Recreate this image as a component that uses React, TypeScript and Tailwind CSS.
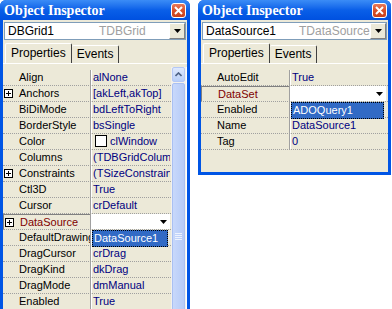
import React from 'react';

const font = { fontFamily: '"Liberation Sans", Arial, sans-serif' };

type Row = { name: string; value?: string; plus?: boolean; swatch?: boolean; selected?: boolean; dropdown?: string };

function CloseBtn() {
  return (
    <div className="w-[15px] h-[15px] rounded-[3px] border border-white bg-gradient-to-b from-[#e8795a] via-[#d8502a] to-[#c8401c] flex items-center justify-center">
      <svg width="9" height="9" viewBox="0 0 9 9">
        <path d="M1 1 L8 8 M8 1 L1 8" stroke="white" strokeWidth="2" />
      </svg>
    </div>
  );
}

function DropArrow() {
  return (
    <svg width="7" height="4" viewBox="0 0 7 4">
      <path d="M0 0 H7 L3.5 4 Z" fill="black" />
    </svg>
  );
}

function PlusBox() {
  return (
    <div className="absolute left-[1px] top-[3px] w-[9px] h-[9px] border border-black bg-white flex items-center justify-center">
      <svg width="7" height="7" viewBox="0 0 7 7">
        <path d="M1 3.5 H6 M3.5 1 V6" stroke="black" strokeWidth="1" />
      </svg>
    </div>
  );
}

function Grid({ rows, nameW, valueW }: { rows: Row[]; nameW: number; valueW: number }) {
  return (
    <div className="flex flex-col">
      {rows.map((r) => (
        <div key={r.name} className="relative flex h-[16px] border-b border-dotted border-[#a0a0a0]">
          <div
            style={{ width: nameW }}
            className={
              'relative h-full pl-[16px] leading-[15px] whitespace-nowrap overflow-hidden ' +
              (r.selected ? 'border-t border-l border-[#808080] text-[#800000]' : 'text-black')
            }
          >
            {r.plus && <PlusBox />}
            {r.name}
          </div>
          <div className="w-[1px] h-full bg-[#a0a0a0]" />
          <div className="w-[1px] h-full bg-white" />
          <div
            style={{ width: valueW }}
            className={
              'relative h-full pl-[1px] leading-[15px] whitespace-nowrap overflow-hidden text-[#000080] ' +
              (r.selected ? 'bg-white' : '')
            }
          >
            {r.swatch && <span className="inline-block align-[-2px] w-[12px] h-[12px] border border-black bg-white mr-[3px] ml-[2px]" />}
            {r.value}
            {r.selected && (
              <div className="absolute right-[3px] top-[6px]">
                <DropArrow />
              </div>
            )}
          </div>
          {r.dropdown && (
            <div
              style={{ left: nameW + 2, width: valueW - 2 }}
              className="absolute top-[16px] h-[17px] z-10 bg-[#316ac5] border border-dotted border-black text-white leading-[15px] pl-[1px]"
            >
              {r.dropdown}
            </div>
          )}
        </div>
      ))}
    </div>
  );
}

function Window({
  width,
  height,
  objName,
  objClass,
  classLeft,
  rows,
  nameW,
  valueW,
  scroll,
}: {
  width: number;
  height: number;
  objName: string;
  objClass: string;
  classLeft: number;
  rows: Row[];
  nameW: number;
  valueW: number;
  scroll?: boolean;
}) {
  return (
    <div
      style={{ width, height }}
      className="flex flex-col rounded-t-[6px] bg-[#0055e5] px-[3px] pb-[3px] overflow-hidden shrink-0"
    >
      <div className="h-[20px] flex items-center justify-between -mx-[3px] px-[4px] bg-gradient-to-b from-[#3b8cf6] via-[#0a5fe8] to-[#0050e0] shrink-0">
        <span className="text-white font-bold text-[14px]" style={{ fontFamily: '"Liberation Serif", "Times New Roman", serif' }}>
          Object Inspector
        </span>
        <CloseBtn />
      </div>
      <div className="flex-1 bg-[#ece9d8] flex flex-col min-h-0 text-[11px]" style={font}>
        <div className="mx-[1px] mt-[2px] h-[18px] border border-[#7f9db9] bg-white flex items-center relative">
          <span className="pl-[3px] text-black text-[12px]">{objName}</span>
          <span style={{ left: classLeft }} className="absolute text-[#a0a0a0] text-[12px]">
            {objClass}
          </span>
          <div className="absolute right-0 top-0 w-[16px] h-[16px] bg-[#ece9d8] border-t border-l border-white border-r border-b border-r-[#808080] border-b-[#808080] flex items-center justify-center">
            <DropArrow />
          </div>
        </div>
        <div className="flex items-end mt-[3px] ml-[2px] h-[20px] shrink-0">
          <div className="h-[20px] px-[5px] border-t border-l border-white border-r border-r-[#404040] rounded-t-[2px] leading-[18px] text-[12px] text-black bg-[#ece9d8]">
            Properties
          </div>
          <div className="h-[18px] px-[5px] border-t border-white border-r border-r-[#404040] rounded-t-[2px] leading-[17px] text-[12px] text-black">
            Events
          </div>
        </div>
        <div className="flex-1 min-h-0 border-t border-white pt-[6px] flex">
          <div className="flex-1 min-h-0 overflow-hidden">
            <Grid rows={rows} nameW={nameW} valueW={valueW} />
          </div>
          {scroll && (
            <div className="w-[16px] -mt-[3px] flex flex-col bg-[#f3f1ec] border-r border-white">
              <div className="h-[15px] mx-[1px] rounded-[2px] bg-gradient-to-b from-[#dfe9fd] to-[#b9cff8] border border-[#b4c8f6] flex items-center justify-center">
                <svg width="7" height="5" viewBox="0 0 7 5">
                  <path d="M0.5 4 L3.5 1 L6.5 4" stroke="#4d6185" strokeWidth="1.6" fill="none" />
                </svg>
              </div>
              <div className="flex-1 mx-[1px] mt-[1px] rounded-[2px] bg-gradient-to-r from-[#c8d8fb] to-[#b6cbf7] border border-[#a9c0f3] flex flex-col items-center pt-[149px]">
                <div className="w-[7px] h-[1px] bg-[#eef3fe] mb-[1px]" />
                <div className="w-[7px] h-[1px] bg-[#eef3fe] mb-[1px]" />
                <div className="w-[7px] h-[1px] bg-[#eef3fe] mb-[1px]" />
                <div className="w-[7px] h-[1px] bg-[#eef3fe]" />
              </div>
            </div>
          )}
        </div>
      </div>
    </div>
  );
}

const leftRows: Row[] = [
  { name: 'Align', value: 'alNone' },
  { name: 'Anchors', value: '[akLeft,akTop]', plus: true },
  { name: 'BiDiMode', value: 'bdLeftToRight' },
  { name: 'BorderStyle', value: 'bsSingle' },
  { name: 'Color', value: 'clWindow', swatch: true },
  { name: 'Columns', value: '(TDBGridColumns)' },
  { name: 'Constraints', value: '(TSizeConstraints)', plus: true },
  { name: 'Ctl3D', value: 'True' },
  { name: 'Cursor', value: 'crDefault' },
  { name: 'DataSource', value: '', plus: true, selected: true, dropdown: 'DataSource1' },
  { name: 'DefaultDrawing', value: 'True' },
  { name: 'DragCursor', value: 'crDrag' },
  { name: 'DragKind', value: 'dkDrag' },
  { name: 'DragMode', value: 'dmManual' },
  { name: 'Enabled', value: 'True' },
];

const rightRows: Row[] = [
  { name: 'AutoEdit', value: 'True' },
  { name: 'DataSet', value: '', selected: true, dropdown: 'ADOQuery1' },
  { name: 'Enabled', value: 'True' },
  { name: 'Name', value: 'DataSource1' },
  { name: 'Tag', value: '0' },
];

export default function App() {
  return (
    <div className="w-[392px] h-[309px] bg-white flex items-start gap-[8px] overflow-hidden">
      <Window
        width={190}
        height={320}
        objName="DBGrid1"
        objClass="TDBGrid"
        classLeft={94}
        rows={leftRows}
        nameW={87}
        valueW={78}
        scroll
      />
      <Window
        width={193}
        height={175}
        objName="DataSource1"
        objClass="TDataSource"
        classLeft={96}
        rows={rightRows}
        nameW={88}
        valueW={95}
      />
    </div>
  );
}
